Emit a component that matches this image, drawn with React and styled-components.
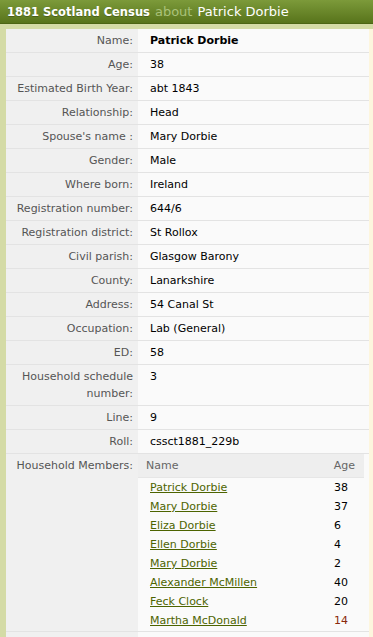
import React from 'react';
import styled, { createGlobalStyle } from 'styled-components';

const GlobalStyle = createGlobalStyle`
  html, body {
    margin: 0;
    padding: 0;
    background: #fdf6de;
  }
  body {
    font-family: Verdana, "DejaVu Sans", sans-serif;
    font-size: 11px;
  }
`;

const Page = styled.div`
  width: 373px;
  height: 637px;
  overflow: hidden;
`;

const TitleBar = styled.div`
  height: 24px;
  display: flex;
  align-items: center;
  gap: 5px;
  padding: 0 7px;
  background: linear-gradient(#7c9a3a, #58741b);
  border-bottom: 1px solid #4c6514;
  box-sizing: border-box;
  font-size: 13px;
  color: #fff;
  white-space: nowrap;
`;

const TitleMain = styled.span`
  font-weight: bold;
  font-size: 11.5px;
  text-shadow: 0 1px 0 rgba(0, 0, 0, 0.25);
`;

const TitleAbout = styled.span`
  color: #aac27a;
`;

const Frame = styled.div`
  background: #d4dba6;
  padding: 5px 0 0 6px;
`;

const Sheet = styled.div`
  border-right: 4px solid #fdf6de;
  background: #fafafa;
`;

const Row = styled.div`
  display: grid;
  grid-template-columns: 132px 1fr;
  border-bottom: 1px solid #e3e3e3;
  line-height: 17px;
`;

const Label = styled.div`
  background: #f0f0f0;
  color: #555;
  text-align: right;
  padding: 3px 5px 3px 8px;
`;

const Value = styled.div`
  color: #000;
  padding: 3px 12px;
  font-weight: ${(p) => (p.$bold ? 'bold' : 'normal')};
`;

const MembersCell = styled.div`
  padding: 0 5px 1px 0;
`;

const MembersHead = styled.div`
  display: flex;
  justify-content: space-between;
  height: 24px;
  align-items: center;
  background: #eeeeee;
  color: #666;
  padding: 0 9px 0 8px;
  border-bottom: 1px solid #e6e6e6;
  box-sizing: border-box;
`;

const Member = styled.div`
  display: grid;
  grid-template-columns: 1fr 30px;
  line-height: 15px;
  padding: 2px 0 2px 12px;
`;

const MemberLink = styled.a`
  color: #4d6400;
  text-decoration: underline;
  cursor: pointer;
`;

const MemberAge = styled.span`
  color: ${(p) => (p.$highlight ? '#8a2a0c' : '#000')};
`;

const facts = [
  ['Name:', 'Patrick Dorbie', true],
  ['Age:', '38'],
  ['Estimated Birth Year:', 'abt 1843'],
  ['Relationship:', 'Head'],
  ["Spouse's name :", 'Mary Dorbie'],
  ['Gender:', 'Male'],
  ['Where born:', 'Ireland'],
  ['Registration number:', '644/6'],
  ['Registration district:', 'St Rollox'],
  ['Civil parish:', 'Glasgow Barony'],
  ['County:', 'Lanarkshire'],
  ['Address:', '54 Canal St'],
  ['Occupation:', 'Lab (General)'],
  ['ED:', '58'],
  ['Household schedule number:', '3'],
  ['Line:', '9'],
  ['Roll:', 'cssct1881_229b'],
];

const members = [
  ['Patrick Dorbie', '38'],
  ['Mary Dorbie', '37'],
  ['Eliza Dorbie', '6'],
  ['Ellen Dorbie', '4'],
  ['Mary Dorbie', '2'],
  ['Alexander McMillen', '40'],
  ['Feck Clock', '20'],
  ['Martha McDonald', '14', true],
];

const App = () => (
  <Page>
    <GlobalStyle />
    <TitleBar>
      <TitleMain>1881 Scotland Census</TitleMain>
      <TitleAbout>about</TitleAbout>
      <span>Patrick Dorbie</span>
    </TitleBar>
    <Frame>
      <Sheet>
        {facts.map(([label, value, bold]) => (
          <Row key={label}>
            <Label>{label}</Label>
            <Value $bold={bold}>{value}</Value>
          </Row>
        ))}
        <Row>
          <Label>Household Members:</Label>
          <MembersCell>
            <MembersHead>
              <span>Name</span>
              <span>Age</span>
            </MembersHead>
            {members.map(([name, age, highlight], i) => (
              <Member key={`member-${i}`}>
                <MemberLink>{name}</MemberLink>
                <MemberAge $highlight={highlight}>{age}</MemberAge>
              </Member>
            ))}
          </MembersCell>
        </Row>
        <Row>
          <Label>&nbsp;</Label>
          <Value>&nbsp;</Value>
        </Row>
      </Sheet>
    </Frame>
  </Page>
);

export default App;
